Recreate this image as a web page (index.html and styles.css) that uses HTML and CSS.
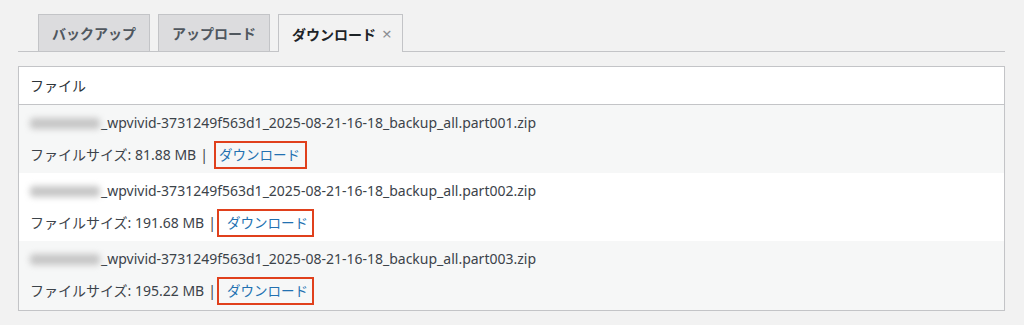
FILE: index.html
```html
<!DOCTYPE html>
<html lang="ja">
<head>
  <meta charset="UTF-8">
  <meta name="viewport" content="width=device-width, initial-scale=1.0">
  <title>ダウンロード</title>
  <link rel="stylesheet" href="styles.css">
</head>
<body>
  <div class="wrap">
    <nav class="tabs">
      <a class="tab">バックアップ</a>
      <a class="tab">アップロード</a>
      <a class="tab tab-active">ダウンロード <span class="tab-close">×</span></a>
    </nav>

    <div class="files">
      <div class="files-head">ファイル</div>

      <div class="file-row alt">
        <div class="file-name"><span class="blurred"></span>_wpvivid-3731249f563d1_2025-08-21-16-18_backup_all.part001.zip</div>
        <div class="file-meta">ファイルサイズ: 81.88 MB <span class="sep">|</span><a class="dl dl-tight">ダウンロード</a></div>
      </div>

      <div class="file-row">
        <div class="file-name"><span class="blurred"></span>_wpvivid-3731249f563d1_2025-08-21-16-18_backup_all.part002.zip</div>
        <div class="file-meta">ファイルサイズ: 191.68 MB <span class="sep">|</span><a class="dl">ダウンロード</a></div>
      </div>

      <div class="file-row alt last">
        <div class="file-name"><span class="blurred"></span>_wpvivid-3731249f563d1_2025-08-21-16-18_backup_all.part003.zip</div>
        <div class="file-meta">ファイルサイズ: 195.22 MB <span class="sep">|</span><a class="dl">ダウンロード</a></div>
      </div>
    </div>
  </div>
</body>
</html>
```

FILE: styles.css
```css
body {
  margin: 0;
  background-color: #f2f2f2;
  font-family: "Noto Sans", "Noto Sans CJK JP", sans-serif;
  color: #3c434a;
}

.wrap {
  padding: 14px 19px 0 18px;
}

.tabs {
  display: flex;
  gap: 8px;
  padding-left: 20px;
  border-bottom: 1px solid #c3c4c7;
  height: 37px;
}

.tab {
  display: flex;
  align-items: center;
  padding: 0 13px;
  height: 36px;
  background-color: #dcdcde;
  border: 1px solid #c3c4c7;
  border-bottom: none;
  font-size: 14px;
  font-weight: bold;
  color: #50575e;
}

.tab-active {
  background-color: #f2f2f2;
  color: #1d2327;
  height: 37px;
  margin-bottom: -1px;
  padding-right: 10px;
}

.tab-close {
  margin-left: 6px;
  font-weight: normal;
  font-size: 17px;
  color: #8c8f94;
}

.files {
  margin-top: 14px;
  background-color: #fff;
  border: 1px solid #c3c4c7;
  box-shadow: 0 1px 1px rgba(0, 0, 0, 0.04);
}

.files-head {
  height: 37px;
  line-height: 37px;
  padding-left: 11px;
  font-size: 14px;
  color: #2c3338;
  border-bottom: 1px solid #c3c4c7;
}

.file-row {
  height: 68px;
  padding-left: 11px;
  box-sizing: border-box;
  padding-top: 9px;
}

.file-row.alt {
  background-color: #f6f7f7;
}

.file-row.last {
  height: 69px;
}

.file-name {
  font-size: 14px;
  line-height: 18px;
  white-space: nowrap;
}

.blurred {
  display: inline-block;
  width: 70px;
  height: 11px;
  margin-right: 1px;
  background-color: #c6c6c6;
  filter: blur(3px);
  border-radius: 4px;
  vertical-align: -1px;
}

.file-meta {
  margin-top: 14px;
  font-size: 14px;
  line-height: 18px;
  display: flex;
  align-items: center;
}

.sep {
  margin: 0 1px 0 4px;
}

.dl {
  color: #2271b1;
  font-size: 13.5px;
  border: 2px solid #e0401c;
  padding: 3px 4px 3px 8px;
  margin: -5px 0;
}

.dl-tight {
  padding: 3px 5px 3px 3px;
  margin-left: 5px;
}
```
